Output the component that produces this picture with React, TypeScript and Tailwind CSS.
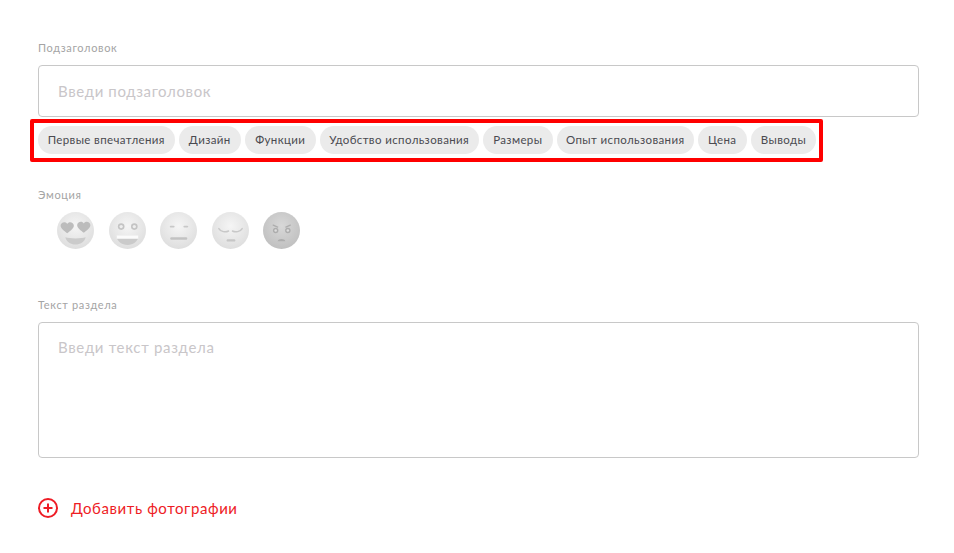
const chips = [
  { label: 'Первые впечатления', w: 'w-[136.5px]' },
  { label: 'Дизайн', w: 'w-[61.5px]' },
  { label: 'Функции', w: 'w-[70.5px]' },
  { label: 'Удобство использования', w: 'w-[158.5px]' },
  { label: 'Размеры', w: 'w-[69.5px]' },
  { label: 'Опыт использования', w: 'w-[136.5px]' },
  { label: 'Цена', w: 'w-[48.5px]' },
  { label: 'Выводы', w: 'w-[65px]' },
];

function Face({ id, dark, children }: { id: string; dark?: boolean; children: React.ReactNode }) {
  return (
    <svg width="37" height="37" viewBox="0 0 38 38">
      <defs>
        <radialGradient id={id} cx="50%" cy="38%" r="62%">
          <stop offset="0%" stopColor={dark ? '#d8d8d8' : '#f5f5f5'} />
          <stop offset="100%" stopColor={dark ? '#c0c0c0' : '#dedede'} />
        </radialGradient>
      </defs>
      <circle cx="19" cy="19" r="19" fill={`url(#${id})`} />
      {children}
    </svg>
  );
}

const heart = 'M0 -3.2C-1.2 -6.2 -6.8 -5.6 -6.8 -1.4C-6.8 1.6 -2.8 4 0 6.4C2.8 4 6.8 1.6 6.8 -1.4C6.8 -5.6 1.2 -6.2 0 -3.2Z';

function Emotions() {
  return (
    <div className="flex gap-[14.5px] pl-[19px] mt-[11px]">
      <Face id="f1">
        <path d={heart} transform="translate(10.5 15.5)" fill="#bcbcbc" />
        <path d={heart} transform="translate(27.5 15)" fill="#bcbcbc" />
        <path d="M8.5 26C13 27.5 25 27.5 29.5 26C28 31 24 33.5 19 33.5C14 33.5 10 31 8.5 26Z" fill="#cbcbcb" />
      </Face>
      <Face id="f2">
        <circle cx="12.5" cy="15" r="3.4" fill="#c4c4c4" />
        <circle cx="12.5" cy="15" r="1.7" fill="#eeeeee" />
        <circle cx="26" cy="15" r="3.4" fill="#c4c4c4" />
        <circle cx="26" cy="15" r="1.7" fill="#eeeeee" />
        <path d="M7.5 24H30.5C30 30.5 25 34 19 34C13 34 8 30.5 7.5 24Z" fill="#cacaca" />
        <path d="M7.5 24H30.5L30 27.5H8Z" fill="#fbfbfb" />
      </Face>
      <Face id="f3">
        <rect x="10" y="14" width="5" height="2" rx="1" fill="#c8c8c8" />
        <rect x="24" y="14" width="5" height="2" rx="1" fill="#c8c8c8" />
        <rect x="10.5" y="26" width="17.5" height="2.4" rx="1.2" fill="#c2c2c2" />
      </Face>
      <Face id="f4">
        <path d="M7 17C9 20.5 14 21 17 19.5" fill="none" stroke="#c8c8c8" strokeWidth="1.5" strokeLinecap="round" />
        <path d="M21 19.5C24 21 29 20.5 31 17" fill="none" stroke="#c8c8c8" strokeWidth="1.5" strokeLinecap="round" />
        <rect x="15" y="28" width="9" height="2.4" rx="1.2" fill="#c6c6c6" />
      </Face>
      <Face id="f5" dark>
        <circle cx="13" cy="19" r="2.8" fill="#adadad" />
        <circle cx="13" cy="19" r="1.3" fill="#dddddd" />
        <circle cx="25.5" cy="19" r="2.8" fill="#adadad" />
        <circle cx="25.5" cy="19" r="1.3" fill="#dddddd" />
        <path d="M10.5 13.5L15 15.5M28 13.5L23.5 15.5" stroke="#adadad" strokeWidth="1.4" strokeLinecap="round" />
        <path d="M15 30C15.5 27 22.5 27 23 30Z" fill="#adadad" />
      </Face>
    </div>
  );
}

export default function App() {
  return (
    <div className="w-[954px] h-[553px] overflow-hidden bg-white px-[38px] pt-[41px] font-['Lato','Liberation_Sans',sans-serif]">
      <div className="text-[11px] leading-[13px] tracking-[0.65px] text-[#a4a4a4]">Подзаголовок</div>
      <div className="mt-[11px] h-[52px] w-[881px] rounded-[4px] border border-[#c8c8c8] pl-[19px] flex items-center text-[15px] tracking-[0.63px] text-[#c9c6c9]">
        Введи подзаголовок
      </div>

      {/* red highlight round the chips */}
      <div className="-ml-[8px] mt-[2px] h-[43px] w-[793px] border-[4px] border-[#ff0000] rounded-[2px] pl-[4px] pt-[3px] flex gap-[4.5px]">
        {chips.map((c) => (
          <div key={c.label} className={`${c.w} h-[28px] shrink-0 rounded-full bg-[#ebebeb] flex items-center justify-center text-[11.5px] tracking-[0.38px] text-[#4a4a50] whitespace-nowrap`}>
            {c.label}
          </div>
        ))}
      </div>

      <div className="mt-[26px] text-[11px] leading-[13px] tracking-[0.65px] text-[#a4a4a4]">Эмоция</div>
      <Emotions />

      <div className="mt-[49px] text-[11px] leading-[13px] tracking-[0.65px] text-[#a4a4a4]">Текст раздела</div>
      <div className="mt-[11px] h-[136px] w-[881px] rounded-[4px] border border-[#c8c8c8] pl-[19px] pt-[14px] text-[15px] leading-[20px] tracking-[0.68px] text-[#c9c6c9]">
        Введи текст раздела
      </div>

      <div className="mt-[39px] flex items-center gap-[13px] text-[15px] tracking-[0.6px] text-[#ee1c25]">
        <svg width="20" height="20" viewBox="0 0 20 20" fill="none" stroke="#ee1c25" strokeWidth="2">
          <circle cx="10" cy="10" r="9" />
          <path d="M10 5.5V14.5M5.5 10H14.5" />
        </svg>
        Добавить фотографии
      </div>
    </div>
  );
}
